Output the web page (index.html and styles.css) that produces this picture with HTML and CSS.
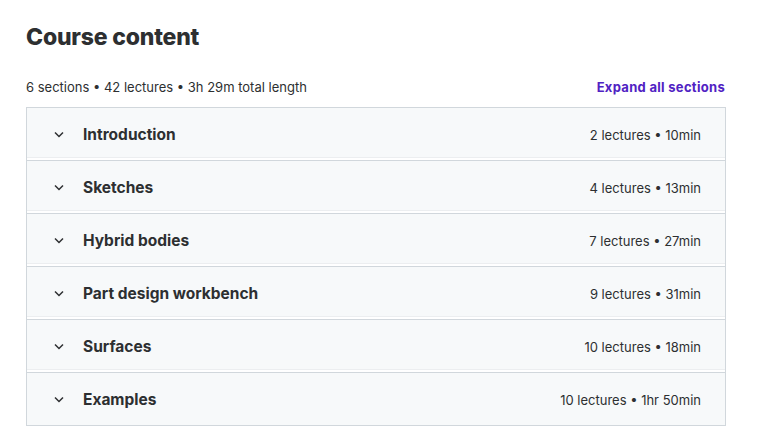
FILE: index.html
```html
<!DOCTYPE html>
<html>
<head>
<meta charset="utf-8">
<link rel="stylesheet" href="styles.css">
</head>
<body>
<div class="page">
  <h2 class="title">Course content</h2>
  <div class="summary">
    <span>6 sections • 42 lectures • 3h 29m total length</span>
    <span class="expand">Expand all sections</span>
  </div>
  <div class="panel">
    <div class="row"><span class="chev"><svg width="10" height="7" viewBox="0 0 10 7"><path d="M1 1.5l4 4 4-4" fill="none" stroke="#2d2f31" stroke-width="1.5"/></svg></span><span class="name">Introduction</span><span class="meta">2 lectures • 10min</span></div>
    <div class="row"><span class="chev"><svg width="10" height="7" viewBox="0 0 10 7"><path d="M1 1.5l4 4 4-4" fill="none" stroke="#2d2f31" stroke-width="1.5"/></svg></span><span class="name">Sketches</span><span class="meta">4 lectures • 13min</span></div>
    <div class="row"><span class="chev"><svg width="10" height="7" viewBox="0 0 10 7"><path d="M1 1.5l4 4 4-4" fill="none" stroke="#2d2f31" stroke-width="1.5"/></svg></span><span class="name">Hybrid bodies</span><span class="meta">7 lectures • 27min</span></div>
    <div class="row"><span class="chev"><svg width="10" height="7" viewBox="0 0 10 7"><path d="M1 1.5l4 4 4-4" fill="none" stroke="#2d2f31" stroke-width="1.5"/></svg></span><span class="name">Part design workbench</span><span class="meta">9 lectures • 31min</span></div>
    <div class="row"><span class="chev"><svg width="10" height="7" viewBox="0 0 10 7"><path d="M1 1.5l4 4 4-4" fill="none" stroke="#2d2f31" stroke-width="1.5"/></svg></span><span class="name">Surfaces</span><span class="meta">10 lectures • 18min</span></div>
    <div class="row"><span class="chev"><svg width="10" height="7" viewBox="0 0 10 7"><path d="M1 1.5l4 4 4-4" fill="none" stroke="#2d2f31" stroke-width="1.5"/></svg></span><span class="name">Examples</span><span class="meta">10 lectures • 1hr 50min</span></div>
  </div>
</div>
</body>
</html>
```
FILE: styles.css
```css
html, body {
  margin: 0;
  padding: 0;
  background: #ffffff;
}
body {
  font-family: "Inter", "Roboto", "Liberation Sans", sans-serif;
  color: #2d2f31;
}
.page {
  width: 700px;
  padding: 22px 0 0 26px;
}
.title {
  margin: 0;
  font-size: 23px;
  font-weight: 800;
  line-height: 30px;
  letter-spacing: -0.2px;
}
.summary {
  display: flex;
  justify-content: space-between;
  align-items: center;
  margin-top: 26px;
  font-size: 13px;
  line-height: 18px;
  padding-right: 1px;
}
.expand {
  color: #5022c3;
  font-weight: 700;
  font-size: 13px;
  letter-spacing: 0.3px;
}
.panel {
  margin-top: 11px;
  border: 1px solid #d1d7dc;
}
.row {
  box-sizing: border-box;
  display: flex;
  align-items: center;
  height: 53px;
  background: #f7f9fa;
  padding: 1px 24px 0 27px;
  border-bottom: 1px solid #d1d7dc;
  box-shadow: inset 0 -2px 0 #ffffff, inset 0 -3px 0 #eceef0;
}
.row:last-child {
  height: 52px;
  border-bottom: none;
  box-shadow: none;
}
.chev {
  width: 29px;
  display: flex;
  align-items: center;
}
.name {
  flex: 1;
  font-weight: 700;
  font-size: 15.5px;
}
.meta {
  font-size: 13px;
}
```
